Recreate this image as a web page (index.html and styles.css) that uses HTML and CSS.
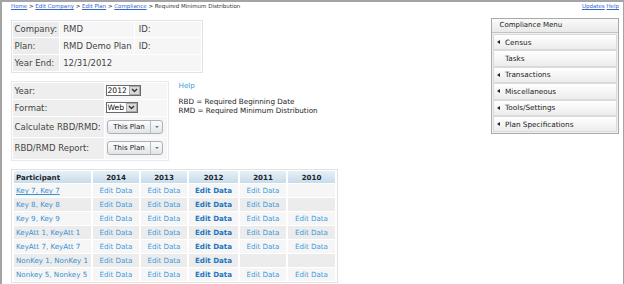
FILE: index.html
```html
<!DOCTYPE html>
<html>
	<head>
		<meta charset="UTF-8">
		<title>Required Minimum Distribution</title>
		<link rel="stylesheet" href="styles.css">
	</head>
	<body>
		<div class="frame">
			<!--面包屑和右上角链接-->
			<div class="topbar">
				<div class="crumbs">
					<a href="#">Home</a> &gt; <a href="#">Edit Company</a> &gt; <a href="#">Edit Plan</a> &gt; <a href="#">Compliance</a> &gt; <span class="here">Required Minimum Distribution</span>
				</div>
				<div class="toplinks"><a href="#">Updates</a> <a href="#">Help</a></div>
			</div>
			<div class="main">
				<div class="content">
					<table class="info">
						<tr><td class="lbl">Company:</td><td class="v1">RMD</td><td class="v2">ID:</td></tr>
						<tr><td class="lbl">Plan:</td><td class="v1">RMD Demo Plan</td><td class="v2">ID:</td></tr>
						<tr><td class="lbl">Year End:</td><td class="v1" colspan="2">12/31/2012</td></tr>
					</table>
					<div class="options">
						<table class="form">
							<tr class="r1">
								<td class="lbl">Year:</td>
								<td class="ctl"><span class="sel w35"><span class="val">2012</span><span class="btn"><svg width="7" height="5" viewBox="0 0 7 5"><path d="M1 1 L3.5 3.6 L6 1" fill="none" stroke="#333" stroke-width="1.4"/></svg></span></span></td>
							</tr>
							<tr class="r2">
								<td class="lbl">Format:</td>
								<td class="ctl"><span class="sel w32"><span class="val">Web</span><span class="btn"><svg width="7" height="5" viewBox="0 0 7 5"><path d="M1 1 L3.5 3.6 L6 1" fill="none" stroke="#333" stroke-width="1.4"/></svg></span></span></td>
							</tr>
							<tr class="r3">
								<td class="lbl">Calculate RBD/RMD:</td>
								<td class="ctl"><span class="split"><span class="txt">This Plan</span><span class="arr"><i></i></span></span></td>
							</tr>
							<tr class="r4">
								<td class="lbl">RBD/RMD Report:</td>
								<td class="ctl"><span class="split"><span class="txt">This Plan</span><span class="arr"><i></i></span></span></td>
							</tr>
						</table>
						<div class="notes">
							<a href="#" class="help">Help</a>
							<p>RBD = Required Beginning Date<br>RMD = Required Minimum Distribution</p>
						</div>
					</div>
					<table class="grid">
						<tr>
							<th class="p">Participant</th><th class="c14">2014</th><th class="c13">2013</th><th class="c12">2012</th><th class="c11">2011</th><th class="c10">2010</th>
						</tr>
						<tr class="odd">
							<td class="p"><a href="#" class="u">Key 7, Key 7</a></td><td><a href="#">Edit Data</a></td><td><a href="#">Edit Data</a></td><td><a href="#" class="b">Edit Data</a></td><td><a href="#">Edit Data</a></td><td></td>
						</tr>
						<tr class="even">
							<td class="p"><a href="#">Key 8, Key 8</a></td><td><a href="#">Edit Data</a></td><td><a href="#">Edit Data</a></td><td><a href="#" class="b">Edit Data</a></td><td><a href="#">Edit Data</a></td><td></td>
						</tr>
						<tr class="odd">
							<td class="p"><a href="#">Key 9, Key 9</a></td><td><a href="#">Edit Data</a></td><td><a href="#">Edit Data</a></td><td><a href="#" class="b">Edit Data</a></td><td><a href="#">Edit Data</a></td><td><a href="#">Edit Data</a></td>
						</tr>
						<tr class="even">
							<td class="p"><a href="#">KeyAtt 1, KeyAtt 1</a></td><td><a href="#">Edit Data</a></td><td><a href="#">Edit Data</a></td><td><a href="#" class="b">Edit Data</a></td><td><a href="#">Edit Data</a></td><td><a href="#">Edit Data</a></td>
						</tr>
						<tr class="odd">
							<td class="p"><a href="#">KeyAtt 7, KeyAtt 7</a></td><td><a href="#">Edit Data</a></td><td><a href="#">Edit Data</a></td><td><a href="#" class="b">Edit Data</a></td><td><a href="#">Edit Data</a></td><td><a href="#">Edit Data</a></td>
						</tr>
						<tr class="even">
							<td class="p"><a href="#">NonKey 1, NonKey 1</a></td><td><a href="#">Edit Data</a></td><td><a href="#">Edit Data</a></td><td><a href="#" class="b">Edit Data</a></td><td></td><td></td>
						</tr>
						<tr class="odd">
							<td class="p"><a href="#">Nonkey 5, Nonkey 5</a></td><td><a href="#">Edit Data</a></td><td><a href="#">Edit Data</a></td><td><a href="#" class="b">Edit Data</a></td><td><a href="#">Edit Data</a></td><td><a href="#">Edit Data</a></td>
						</tr>
					</table>
				</div>
				<!--右边菜单-->
				<div class="menu">
					<div class="menu-head">Compliance Menu</div>
					<ul class="menu-list">
						<li><i class="tri"></i>Census</li>
						<li><i class="none"></i>Tasks</li>
						<li><i class="tri"></i>Transactions</li>
						<li><i class="tri"></i>Miscellaneous</li>
						<li><i class="tri"></i>Tools/Settings</li>
						<li><i class="tri"></i>Plan Specifications</li>
					</ul>
				</div>
			</div>
		</div>
	</body>
</html>
```

FILE: styles.css
```css
*{
	margin: 0;
	padding: 0;
}
body{
	font-family: "DejaVu Sans", Verdana, sans-serif;
	color: #222;
	background: #fff;
}
a{
	color: #3d9bdc;
	text-decoration: none;
}
.frame{
	height: 284px;
	box-sizing: border-box;
	border-top: 2px solid #a4a4a4;
	border-left: 2px solid #a4a4a4;
	border-right: 1px solid #a4a4a4;
	padding: 0 4px 0 9px;
	overflow: hidden;
}
.topbar{
	display: flex;
	justify-content: space-between;
	height: 9px;
	line-height: 9px;
	font-size: 5.5px;
}
.crumbs a,.toplinks a{
	color: #3366cc;
	text-decoration: underline;
}
.crumbs .here{
	color: #333;
}
.main{
	display: flex;
	margin-top: 7px;
}
.content{
	flex: 1;
}
/* 公司信息 */
.info{
	margin-top: 1.5px;
	border: 1px solid #dde5eb;
	border-spacing: 1px;
	font-size: 8.5px;
	color: #444;
}
.info td{
	height: 15.7px;
	padding: 0 2px;
	background: #f6f6f6;
	white-space: nowrap;
}
.info .lbl{
	width: 41px;
	padding-left: 1.5px;
	background: #ececec;
}
.info .v1{
	width: 68px;
	padding-left: 3px;
}
.info .v2{
	width: 60px;
	padding-left: 4px;
}
/* 选项 */
.options{
	display: flex;
	margin-top: 8.2px;
}
.form{
	border: 1px solid #e4eaef;
	border-spacing: 1px;
	font-size: 8.5px;
	color: #444;
}
.form td{
	padding: 0;
	white-space: nowrap;
}
.form .lbl{
	width: 89px;
	padding-left: 1.5px;
	background: #eeeeee;
}
.form .ctl{
	width: 62px;
	background: #f6f6f6;
}
.form .r1 td,.form .r2 td{
	height: 16px;
}
.form .r3 td{
	height: 20px;
}
.form .r4 td{
	height: 21px;
}
.sel{
	display: inline-flex;
	vertical-align: middle;
	height: 11px;
	margin-left: 1px;
	box-sizing: border-box;
	border: 1px solid #6a6a6a;
	background: #fff;
	font-size: 7.6px;
	color: #111;
}
.w35{
	width: 35px;
}
.w32{
	width: 32px;
}
.sel .val{
	flex: 1;
	line-height: 9px;
	padding-left: 1px;
}
.sel .btn{
	width: 11px;
	box-sizing: border-box;
	border: 1px solid #a9a9a9;
	background: #d9d9d9;
	display: flex;
	align-items: center;
	justify-content: center;
}
.split{
	display: inline-flex;
	vertical-align: middle;
	width: 56px;
	height: 14px;
	margin-left: 2.5px;
	box-sizing: border-box;
	border: 1px solid #aab1b8;
	border-radius: 3px;
	background: linear-gradient(#fcfcfc, #e2e5e8);
	font-size: 7px;
	color: #222;
}
.split .txt{
	width: 42px;
	text-align: center;
	line-height: 12px;
}
.split .arr{
	flex: 1;
	border-left: 1px solid #b9bec3;
	display: flex;
	align-items: center;
	justify-content: center;
}
.split .arr i{
	width: 0;
	height: 0;
	border-left: 2.5px solid transparent;
	border-right: 2.5px solid transparent;
	border-top: 2.5px solid #777;
}
.notes{
	margin-left: 10px;
	font-size: 7.2px;
	line-height: 9px;
}
.notes .help{
	display: block;
	color: #3ba0e2;
}
.notes p{
	margin-top: 7.3px;
	color: #222;
}
/* 参与者表格 */
.grid{
	margin-top: 8.3px;
	border: 1px solid #e2e2e2;
	border-spacing: 2px 1px;
	font-size: 7.1px;
}
.grid th{
	height: 12px;
	padding: 0;
	background: linear-gradient(#e6f0f6, #c8dce9);
	color: #1b2730;
	font-weight: bold;
	text-align: center;
}
.grid th.p{
	text-align: left;
	padding-left: 2px;
}
.grid td{
	height: 13px;
	padding: 0;
	text-align: center;
	white-space: nowrap;
}
.grid td.p{
	text-align: left;
	padding-left: 2px;
}
.grid .p{
	width: 75px;
}
.c14,.c13,.c11{
	width: 46px;
}
.c12{
	width: 49px;
}
.c10{
	width: 47px;
}
.grid .odd td{
	background: #f6f6f6;
}
.grid .even td{
	background: #ececec;
}
.grid td.p a{
	color: #3890d0;
}
.grid a.u{
	text-decoration: underline;
}
.grid a.b{
	color: #1e77c0;
	font-weight: bold;
}
/* 菜单 */
.menu{
	width: 128px;
	box-sizing: border-box;
	align-self: flex-start;
	border: 1px solid #a9a9a9;
	background: #f1f1f1;
	font-size: 7.3px;
	color: #222;
}
.menu-head{
	height: 13px;
	line-height: 13px;
	padding-left: 7.5px;
	background: linear-gradient(#fafafa, #e9e9e9);
	border-bottom: 1px solid #c2c2c2;
	font-size: 7px;
}
.menu-list{
	list-style: none;
	padding: 1px;
}
.menu-list li{
	display: flex;
	align-items: center;
	height: 14.4px;
	border: 1px solid #dadada;
	background: linear-gradient(#ffffff, #ececec);
}
.menu-list i{
	width: 0;
	height: 0;
	margin-left: 3px;
	margin-right: 5px;
	border-top: 2px solid transparent;
	border-bottom: 2px solid transparent;
	border-right: 3px solid #222;
}
.menu-list i.none{
	border-right-color: transparent;
}
```
